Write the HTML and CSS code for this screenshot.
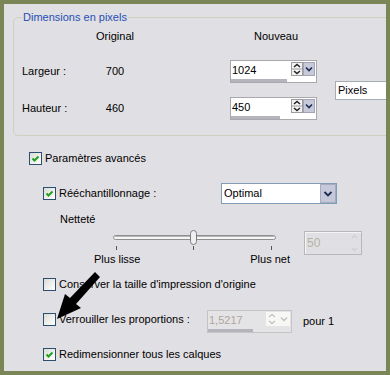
FILE: index.html
```html
<!DOCTYPE html>
<html>
<head>
  <title>Taille de l'image</title>
  <link rel="stylesheet" href="styles.css">
</head>
<body>
  <div class="window">
    <fieldset class="group">
      <legend>Dimensions en pixels</legend>
      <div class="dims">
        <span class="col-head orig">Original</span>
        <span class="col-head new">Nouveau</span>

        <span class="dim-label row-w">Largeur :</span>
        <span class="dim-value row-w">700</span>
        <div class="spin dim-spin row-w">
          <div class="spin-top">
            <span class="spin-text">1024</span>
            <svg class="spin-ud" width="12" height="14" viewBox="0 0 12 14">
              <rect x="0.5" y="0.5" width="11" height="13" fill="#f3f3f3" stroke="#9c9c9c"/>
              <line x1="1" y1="7" x2="11" y2="7" stroke="#9c9c9c"/>
              <path d="M3 5 L6 2.5 L9 5" fill="none" stroke="#222" stroke-width="1.5"/>
              <path d="M3 9 L6 11.5 L9 9" fill="none" stroke="#222" stroke-width="1.5"/>
            </svg>
            <svg class="spin-dd" width="12" height="14" viewBox="0 0 12 14">
              <rect x="0.5" y="0.5" width="11" height="13" fill="#c7c8d8" stroke="#a2a4b8"/>
              <path d="M3 5.5 L6 8.5 L9 5.5" fill="none" stroke="#1d2a55" stroke-width="1.6"/>
            </svg>
          </div>
          <div class="spin-bar" style="width: 56px;"></div>
        </div>
        <div class="units">Pixels</div>

        <span class="dim-label row-h">Hauteur :</span>
        <span class="dim-value row-h">460</span>
        <div class="spin dim-spin row-h">
          <div class="spin-top">
            <span class="spin-text">450</span>
            <svg class="spin-ud" width="12" height="14" viewBox="0 0 12 14">
              <rect x="0.5" y="0.5" width="11" height="13" fill="#f3f3f3" stroke="#9c9c9c"/>
              <line x1="1" y1="7" x2="11" y2="7" stroke="#9c9c9c"/>
              <path d="M3 5 L6 2.5 L9 5" fill="none" stroke="#222" stroke-width="1.5"/>
              <path d="M3 9 L6 11.5 L9 9" fill="none" stroke="#222" stroke-width="1.5"/>
            </svg>
            <svg class="spin-dd" width="12" height="14" viewBox="0 0 12 14">
              <rect x="0.5" y="0.5" width="11" height="13" fill="#c7c8d8" stroke="#a2a4b8"/>
              <path d="M3 5.5 L6 8.5 L9 5.5" fill="none" stroke="#1d2a55" stroke-width="1.6"/>
            </svg>
          </div>
          <div class="spin-bar" style="width: 49px;"></div>
        </div>
      </div>
    </fieldset>

    <div class="option opt-main">
      <span class="check"><svg width="11" height="11" viewBox="0 0 11 11"><path d="M2.5 5.5 L4.5 7.5 L8.5 3.5" fill="none" stroke="#21a121" stroke-width="2"/></svg></span>
      <span>Paramètres avancés</span>
    </div>

    <div class="option resample">
      <span class="check"><svg width="11" height="11" viewBox="0 0 11 11"><path d="M2.5 5.5 L4.5 7.5 L8.5 3.5" fill="none" stroke="#21a121" stroke-width="2"/></svg></span>
      <span class="resample-label">Rééchantillonnage :</span>
      <div class="select">
        <span class="select-text">Optimal</span>
        <svg class="select-btn" width="16" height="19" viewBox="0 0 16 19">
          <rect x="0.5" y="0.5" width="15" height="18" fill="#c5c8d8" stroke="#a7abc0"/>
          <path d="M4.5 8 L8 11.5 L11.5 8" fill="none" stroke="#1d2a55" stroke-width="1.8"/>
        </svg>
      </div>
    </div>

    <div class="sharp-title">Netteté</div>

    <div class="slider-row">
      <div class="slider">
        <svg width="196" height="22" viewBox="0 0 196 22">
          <rect x="19.5" y="6.5" width="162" height="4" rx="2" fill="#f6f6f6" stroke="#8e8e8e"/>
          <line x1="21" y1="7.5" x2="180" y2="7.5" stroke="#b5b5b5"/>
          <rect x="96.5" y="1.5" width="6" height="14" rx="3" fill="#efefef" stroke="#7d7d7d"/>
          <line x1="22.5" y1="17" x2="22.5" y2="21" stroke="#555"/>
          <line x1="99.5" y1="17" x2="99.5" y2="21" stroke="#555"/>
          <line x1="177.5" y1="17" x2="177.5" y2="21" stroke="#555"/>
        </svg>
        <div class="slider-labels">
          <span>Plus lisse</span>
          <span>Plus net</span>
        </div>
      </div>
      <div class="num-box">
        <span class="num-text">50</span>
        <svg width="11" height="22" viewBox="0 0 11 22">
          <path d="M3 6 L5.5 3.5 L8 6" fill="none" stroke="#d0d0d0" stroke-width="1.4"/>
          <path d="M3 16 L5.5 18.5 L8 16" fill="none" stroke="#d0d0d0" stroke-width="1.4"/>
        </svg>
      </div>
    </div>

    <div class="option sub">
      <span class="check"></span>
      <span>Conserver la taille d'impression d'origine</span>
    </div>

    <div class="option ratio">
      <span class="check"></span>
      <span class="ratio-label">Verrouiller les proportions :</span>
      <div class="spin off">
        <div class="spin-top">
          <span class="spin-text">1,5217</span>
          <svg class="spin-ud" width="12" height="14" viewBox="0 0 12 14">
            <rect x="0" y="0" width="12" height="14" fill="#f7f7f5"/>
            <path d="M3 5 L6 2.5 L9 5" fill="none" stroke="#c6c6c0" stroke-width="1.5"/>
            <path d="M3 9 L6 11.5 L9 9" fill="none" stroke="#c6c6c0" stroke-width="1.5"/>
          </svg>
          <svg class="spin-dd" width="12" height="14" viewBox="0 0 12 14">
            <rect x="0" y="0" width="12" height="14" fill="#f7f7f5"/>
            <path d="M3 5.5 L6 8.5 L9 5.5" fill="none" stroke="#c6c6c0" stroke-width="1.6"/>
          </svg>
        </div>
        <div class="spin-bar" style="width: 45px;"></div>
      </div>
      <span class="ratio-unit">pour 1</span>
    </div>

    <div class="option sub resize">
      <span class="check"><svg width="11" height="11" viewBox="0 0 11 11"><path d="M2.5 5.5 L4.5 7.5 L8.5 3.5" fill="none" stroke="#21a121" stroke-width="2"/></svg></span>
      <span>Redimensionner tous les calques</span>
    </div>

    <svg class="pointer" width="55" height="56" viewBox="50 268 55 56">
      <polygon points="57,319 81,308 76,304 100,277 95,272 70,298 65,294" fill="#000"/>
    </svg>
  </div>
</body>
</html>
```

FILE: styles.css
```css
body {
  margin: 0;
  background-color: #7b8656; /* olive frame */
  font-family: "Liberation Sans", Arial, sans-serif;
  font-size: 11px;
  color: #000;
}

.window {
  position: relative;
  margin: 4px;
  height: 367px;
  background-color: #e0dfe3;
  overflow: hidden;
}

.group {
  margin: 6px -20px 0 9px;
  padding: 0 0 15px 8px;
  border: 1px solid #d0d0bf;
  border-radius: 5px;
  min-width: 0;
}

.group legend {
  color: #1f4fb4;
  padding: 0 1px;
  line-height: 14px;
}

.dims {
  display: grid;
  grid-template-columns: 68px 50px 90px 105px 1fr;
  grid-template-rows: 36px 37px 23px;
  align-items: start;
}

.col-head {
  line-height: 24px;
  grid-row: 1;
}

.row-w {
  grid-row: 2;
}

.row-h {
  grid-row: 3;
}

.orig {
  grid-column: 2;
  justify-self: center;
}

.new {
  grid-column: 4;
  margin-left: 24px;
}

.dim-label {
  grid-column: 1;
  line-height: 23px;
}

.dim-value {
  grid-column: 2;
  justify-self: center;
  line-height: 23px;
}

.dim-spin {
  grid-column: 4;
}

.units {
  grid-column: 5;
  grid-row: 2 / 4;
  align-self: center;
  height: 19px;
  box-sizing: border-box;
  border: 1px solid #a5acb2;
  background-color: #fff;
  padding-left: 2px;
  line-height: 17px;
}

.spin {
  width: 87px;
  height: 23px;
  box-sizing: border-box;
  border: 1px solid #a9a8ad;
  background-color: #fff;
  display: flex;
  flex-direction: column;
  justify-content: space-between;
}

.spin-top {
  display: flex;
  align-items: flex-start;
  padding: 1px 1px 0 1px;
}

.spin-text {
  flex: 1;
  line-height: 16px;
}

.spin-ud,
.spin-dd {
  display: block;
  flex: none;
}

.spin-bar {
  height: 3px;
  background-color: #b4b4bc;
}

.spin.off {
  width: 85px;
  background-color: #e4e3e6;
  border-color: #c4c4c4;
}

.spin.off .spin-text {
  color: #aca899;
}

.option {
  display: flex;
  align-items: center;
  gap: 3px;
  height: 13px;
  line-height: 13px;
}

.check {
  width: 13px;
  height: 13px;
  box-sizing: border-box;
  border: 1px solid #2b4f73;
  background: linear-gradient(135deg, #dcdcd5, #fff);
  flex: none;
}

.check svg {
  display: block;
}

.opt-main {
  margin: 16px 0 0 25px;
}

.resample {
  height: 21px;
  margin: 18px 0 0 39px;
}

.resample-label {
  width: 159px;
}

.select {
  width: 116px;
  height: 21px;
  box-sizing: border-box;
  border: 1px solid #7f9db9;
  background-color: #fff;
  display: flex;
  align-items: center;
}

.select-text {
  flex: 1;
  padding-left: 2px;
}

.select-btn {
  display: block;
}

.sharp-title {
  margin: 8px 0 0 56px;
  line-height: 14px;
}

.slider-row {
  display: flex;
  align-items: flex-start;
  margin-top: 3px;
  padding-left: 90px;
}

.slider {
  width: 196px;
}

.slider svg {
  display: block;
}

.slider-labels {
  display: flex;
  justify-content: space-between;
  margin-top: 2px;
  line-height: 13px;
}

.num-box {
  width: 58px;
  height: 24px;
  box-sizing: border-box;
  margin: 2px 0 0 14px;
  border: 1px solid #b8b8b8;
  box-shadow: inset 1px 1px 0 #f4f4f4;
  display: flex;
  align-items: center;
  padding: 0 1px 0 2px;
}

.num-text {
  flex: 1;
  color: #b5b3a8;
  font-size: 12px;
}

.sub {
  margin: 12px 0 0 39px;
}

.ratio {
  align-items: flex-start;
  height: 23px;
  margin: 19px 0 0 39px;
}

.ratio .check {
  margin-top: 3px;
}

.ratio-label {
  width: 145px;
  line-height: 19px;
}

.ratio-unit {
  margin-left: 8px;
  line-height: 23px;
}

.resize {
  margin-top: 15px;
}

.pointer {
  position: absolute;
  left: 46px;
  top: 264px;
}
```
